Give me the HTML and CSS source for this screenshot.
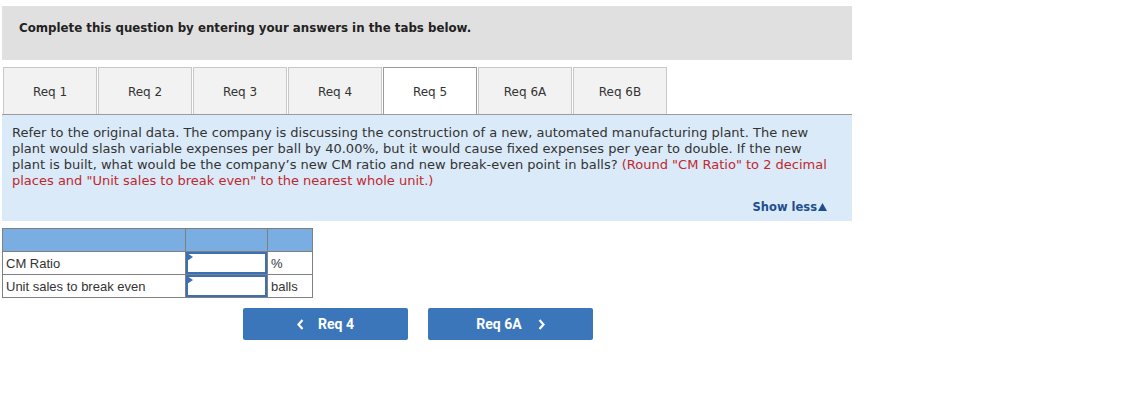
FILE: index.html
```html
<!DOCTYPE html>
<html>
<head>
<meta charset="utf-8">
<link rel="stylesheet" href="styles.css">
</head>
<body>
<div class="page">
  <div class="header">Complete this question by entering your answers in the tabs below.</div>
  <div class="tabs">
    <div class="tab">Req 1</div>
    <div class="tab">Req 2</div>
    <div class="tab">Req 3</div>
    <div class="tab">Req 4</div>
    <div class="tab active">Req 5</div>
    <div class="tab">Req 6A</div>
    <div class="tab">Req 6B</div>
  </div>
  <div class="panel">
    <p class="question">Refer to the original data. The company is discussing the construction of a new, automated manufacturing plant. The new plant would slash variable expenses per ball by 40.00%, but it would cause fixed expenses per year to double. If the new plant is built, what would be the company’s new CM ratio and new break-even point in balls? <span class="note">(Round "CM Ratio" to 2 decimal places and "Unit sales to break even" to the nearest whole unit.)</span></p>
    <div class="showless">Show less<svg class="tri" width="9" height="8" viewBox="0 0 9 8"><polygon points="0,8 4.5,0 9,8" fill="#1f4e8c"/></svg></div>
  </div>
  <table class="answers">
    <tr class="head"><td class="c1"></td><td class="c2"></td><td class="c3"></td></tr>
    <tr><td class="c1">CM Ratio</td><td class="c2 inp"><div class="box"></div></td><td class="c3">%</td></tr>
    <tr><td class="c1">Unit sales to break even</td><td class="c2 inp"><div class="box"></div></td><td class="c3">balls</td></tr>
  </table>
  <div class="nav">
    <div class="btn"><svg class="chev" width="7" height="11" viewBox="0 0 7 11"><polyline points="5.5,1 1.5,5.5 5.5,10" fill="none" stroke="#fff" stroke-width="2.2"/></svg>Req 4</div>
    <div class="btn">Req 6A<svg class="chev right" width="7" height="11" viewBox="0 0 7 11"><polyline points="1.5,1 5.5,5.5 1.5,10" fill="none" stroke="#fff" stroke-width="2.2"/></svg></div>
  </div>
</div>
</body>
</html>
```
FILE: styles.css
```css
body {
  margin: 0;
  background: #fff;
  font-family: "DejaVu Sans", Verdana, sans-serif;
}
.page {
  margin-left: 2px;
  width: 850px;
  padding-top: 6px;
}
.header {
  background: #e0e0e0;
  height: 54px;
  box-sizing: border-box;
  padding: 15px 0 0 17px;
  font-size: 11.8px;
  font-weight: bold;
  color: #222;
}
.tabs {
  display: flex;
  gap: 1px;
  padding-left: 1px;
  margin-top: 7px;
  border-bottom: 1px solid #9a9a9a;
}
.tab {
  width: 94px;
  height: 47px;
  box-sizing: border-box;
  border: 1px solid #c8c8c8;
  border-bottom: none;
  background: #f2f2f2;
  font-size: 12px;
  color: #333;
  display: flex;
  align-items: center;
  justify-content: center;
  padding-top: 1px;
}
.tab.active {
  background: #fff;
  border-color: #9a9a9a;
}
.panel {
  background: #dbeaf8;
  padding: 10px 18px 7px 10px;
}
.question {
  margin: 0;
  font-size: 13px;
  line-height: 16px;
  color: #333;
}
.note {
  color: #c1272d;
}
.showless {
  text-align: right;
  margin-top: 11px;
  margin-right: 7px;
  font-size: 11.5px;
  font-weight: bold;
  color: #1f4e8c;
  display: flex;
  justify-content: flex-end;
  align-items: center;
  gap: 1px;
}
.answers {
  margin-top: 7px;
  border-collapse: collapse;
  font-family: "Liberation Sans", Arial, sans-serif;
  font-size: 13px;
  color: #333;
}
.answers td {
  border: 1px solid #808080;
  height: 23px;
  padding: 0 3px;
  box-sizing: border-box;
}
.answers .head td {
  background: #7aaee3;
}
.c1 { width: 183px; }
.c2 { width: 82px; }
.c3 { width: 45px; }
.answers td.inp {
  padding: 0;
}
.box {
  height: 22px;
  box-sizing: border-box;
  border: 2px solid #3c70b5;
  position: relative;
}
.box::before {
  content: "";
  position: absolute;
  left: -1px;
  top: -1px;
  border-top: 4px solid transparent;
  border-bottom: 4px solid transparent;
  border-left: 6px solid #3c70b5;
}
.nav {
  display: flex;
  gap: 20px;
  margin-top: 10px;
  padding-left: 241px;
}
.btn {
  width: 165px;
  height: 32px;
  background: #3b76ba;
  border-radius: 2px;
  color: #fff;
  font-family: Roboto, "Liberation Sans", Arial, sans-serif;
  font-weight: bold;
  font-size: 14px;
  display: flex;
  align-items: center;
  justify-content: center;
}
.chev {
  margin-right: 14px;
}
.chev.right {
  margin-right: 0;
  margin-left: 16px;
}
```
